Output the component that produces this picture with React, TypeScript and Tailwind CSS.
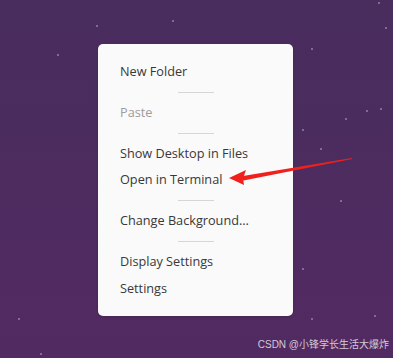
import React from "react";

const stars: [number, number][] = [
  [96, 25], [172, 20], [57, 54], [311, 48], [385, 27], [378, 2], [302, 129],
  [345, 118], [366, 110], [380, 108], [320, 148], [340, 200], [302, 268],
  [311, 318], [374, 315], [18, 318], [40, 353],
];

function Item({ label, muted }: { label: string; muted?: boolean }) {
  return (
    <div
      className={`h-[26px] flex items-center pl-[22px] text-[12.7px] ${
        muted ? "text-[#9c9c9c]" : "text-[#383838]"
      }`}
    >
      {label}
    </div>
  );
}

function Separator() {
  return (
    <div className="py-[7px] flex justify-center">
      <div className="w-[36px] h-px bg-[#d6d6d6]" />
    </div>
  );
}

export default function App() {
  return (
    <div
      className="relative w-[393px] h-[358px] overflow-hidden bg-gradient-to-b from-[#482d5d] to-[#522a62]"
      style={{ fontFamily: '"Open Sans", "Noto Sans", sans-serif' }}
    >
      {stars.map(([x, y], i) => (
        <span
          key={i}
          className="absolute w-[2px] h-[2px] bg-[#8e7aa6] opacity-80"
          style={{ left: x, top: y }}
        />
      ))}

      <div className="pt-[44px] pl-[98px]">
        <div className="w-[195px] bg-[#fafafa] rounded-[5px] pt-[15px] pb-[14px] shadow-sm">
          <Item label="New Folder" />
          <Separator />
          <Item label="Paste" muted />
          <Separator />
          <Item label="Show Desktop in Files" />
          <Item label="Open in Terminal" />
          <Separator />
          <Item label="Change Background…" />
          <Separator />
          <Item label="Display Settings" />
          <div className="pt-px">
            <Item label="Settings" />
          </div>
        </div>
      </div>

      <svg
        className="absolute left-0 top-0"
        width="393"
        height="358"
        viewBox="0 0 393 358"
      >
        <polygon
          points="352,158 240,176.5 241,181 352,159"
          fill="#f0201c"
        />
        <polygon points="229,178 246,170 243,178.5 244,185" fill="#f0201c" />
      </svg>

      <div
        className="absolute right-[4px] bottom-[6px] text-[10px] text-[#d2c9da]"
        style={{ fontFamily: '"Liberation Sans", "Noto Sans CJK SC", sans-serif' }}
      >
        CSDN @小锋学长生活大爆炸
      </div>
    </div>
  );
}
